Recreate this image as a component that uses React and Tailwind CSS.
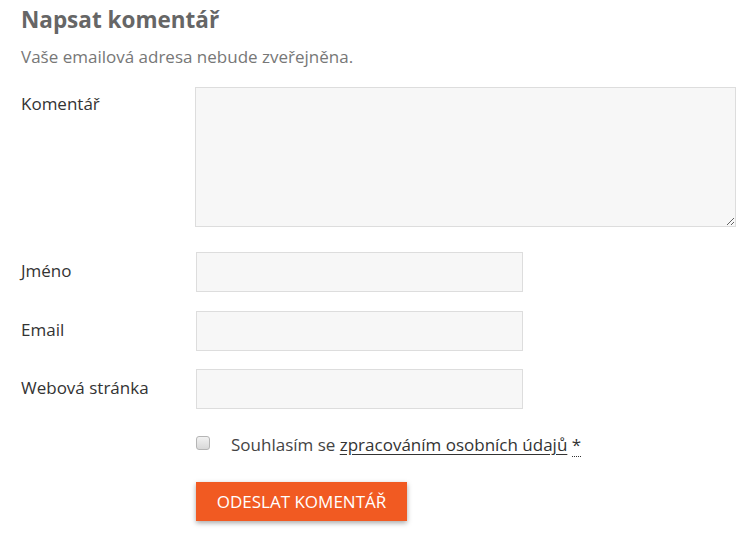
export default function App() {
  const fields = [
    { label: 'Jméno', mt: 'mt-[25px]' },
    { label: 'Email', mt: 'mt-[19px]' },
    { label: 'Webová stránka', mt: 'mt-[18px]' },
  ];

  return (
    <div className="min-h-[538px] bg-white pl-[21px] pt-[4px] font-['Open_Sans',sans-serif]">
      <h3 className="text-[22.5px] font-bold leading-[32px] text-[#666]">Napsat komentář</h3>
      <p className="mt-[9px] text-[17px] leading-[24px] text-[#777]">Vaše emailová adresa nebude zveřejněna.</p>

      <div className="mt-[18px] flex">
        <label className="w-[174px] pt-[4px] text-[17px] leading-[26px] text-[#333]">Komentář</label>
        <textarea className="h-[140px] w-[541px] resize-y border border-[#ddd] bg-[#f7f7f7] outline-none" />
      </div>

      {fields.map((f) => (
        <div key={f.label} className={`${f.mt} flex items-center`}>
          <label className="-mt-[3px] w-[175px] text-[17px] leading-[26px] text-[#333]">{f.label}</label>
          <input className="h-[40px] w-[327px] border border-[#ddd] bg-[#f7f7f7] outline-none" />
        </div>
      ))}

      <div className="mt-[23px] ml-[175px] flex items-center">
        <input
          type="checkbox"
          className="mb-[4px] h-[14px] w-[14px] appearance-none rounded-[3px] border border-[#b5b5b5] bg-gradient-to-b from-[#f2f2f2] to-[#d8d8d8]"
        />
        <span className="ml-[21px] text-[17px] leading-[26px] text-[#444]">
          Souhlasím se <a className="text-[#333] underline underline-offset-[3px]">zpracováním osobních údajů</a>{' '}
          <span className="border-b border-dotted border-[#333] text-[#333]">*</span>
        </span>
      </div>

      <button className="mt-[24px] ml-[175px] h-[39px] w-[211px] bg-[#f15a22] text-[17px] uppercase text-white shadow-[0_2px_5px_rgba(0,0,0,0.35)]">
        Odeslat komentář
      </button>
    </div>
  );
}
